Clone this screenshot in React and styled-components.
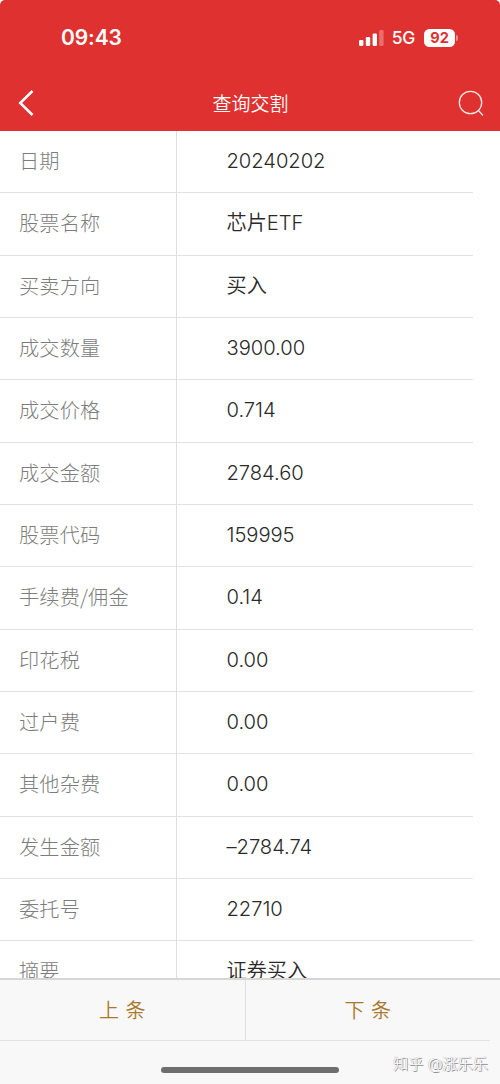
import styled, { createGlobalStyle } from "styled-components";

const records = [
  { label: "日期", value: "20240202" },
  { label: "股票名称", value: "芯片ETF" },
  { label: "买卖方向", value: "买入" },
  { label: "成交数量", value: "3900.00" },
  { label: "成交价格", value: "0.714" },
  { label: "成交金额", value: "2784.60" },
  { label: "股票代码", value: "159995" },
  { label: "手续费/佣金", value: "0.14" },
  { label: "印花税", value: "0.00" },
  { label: "过户费", value: "0.00" },
  { label: "其他杂费", value: "0.00" },
  { label: "发生金额", value: "–2784.74" },
  { label: "委托号", value: "22710" },
  { label: "摘要", value: "证券买入" },
];

const App = () => {
  return (
    <Screen>
      <GlobalStyle />
      <Header>
        <StatusBar>
          <Time>09:43</Time>
          <Signal />
          <Network>5G</Network>
          <Battery>92</Battery>
          <BatteryTip />
        </StatusBar>
        <NavBar>
          <BackIcon viewBox="0 0 16 26">
            <path d="M14.5 1 L2.2 13 L14.5 25" />
          </BackIcon>
          <Title>查询交割</Title>
          <SearchIcon viewBox="0 0 26 27">
            <circle cx="12.5" cy="12.5" r="11.2" />
            <path d="M20.5 20.5 L25 25.5" />
          </SearchIcon>
        </NavBar>
      </Header>
      <Table>
        {records.map(({ label, value }) => (
          <Row key={label}>
            <Label>{label}</Label>
            <Value>{value}</Value>
          </Row>
        ))}
      </Table>
      <Footer>
        <Pager>
          <PagerButton $divider>上 条</PagerButton>
          <PagerButton>下 条</PagerButton>
        </Pager>
        <HomeArea>
          <HomeBar />
          <Watermark>知乎 @涨乐乐</Watermark>
        </HomeArea>
      </Footer>
    </Screen>
  );
};

const Signal = () => (
  <SignalIcon viewBox="0 0 25 16">
    <rect x="0" y="10" width="4.4" height="6" rx="1.3" />
    <rect x="6.8" y="7" width="4.4" height="9" rx="1.3" />
    <rect x="13.6" y="3.5" width="4.4" height="12.5" rx="1.3" />
    <rect x="20.2" y="0" width="4.4" height="16" rx="1.3" opacity="0.3" />
  </SignalIcon>
);

const GlobalStyle = createGlobalStyle`
  * {
    box-sizing: border-box;
  }
  body {
    margin: 0;
    background: #fff;
  }
`;

const Screen = styled.main`
  width: 500px;
  height: 1084px;
  display: flex;
  flex-direction: column;
  overflow: hidden;
  background: #fff;
  font-family: Inter, "Noto Sans CJK SC", sans-serif;
`;

const Header = styled.header`
  height: 131px;
  flex-shrink: 0;
  background: #de3130;
  color: #fff;
  border-radius: 5px 5px 0 0;
`;

const StatusBar = styled.div`
  height: 75px;
  padding: 0 42px 0 61px;
  display: flex;
  align-items: center;
`;

const Time = styled.span`
  margin-right: auto;
  font-size: 21px;
  font-weight: 600;
  letter-spacing: -0.1px;
`;

const SignalIcon = styled.svg`
  width: 25px;
  height: 16px;
  fill: #fff;
`;

const Network = styled.span`
  margin-left: 8px;
  font-size: 17.5px;
  font-weight: 500;
  letter-spacing: -0.3px;
`;

const Battery = styled.span`
  width: 31px;
  height: 18px;
  margin-left: 9px;
  border-radius: 5.5px;
  background: #fff;
  color: #de3130;
  font-size: 14.5px;
  font-weight: 700;
  line-height: 18px;
  text-align: center;
`;

const BatteryTip = styled.span`
  width: 2px;
  height: 6px;
  margin-left: 1px;
  border-radius: 0 2px 2px 0;
  background: rgba(255, 255, 255, 0.45);
`;

const NavBar = styled.nav`
  height: 56px;
  padding: 0 16px 0 18px;
  display: flex;
  align-items: center;
  justify-content: space-between;
`;

const BackIcon = styled.svg`
  width: 16px;
  height: 26px;
  fill: none;
  stroke: #fff;
  stroke-width: 2.5;
`;

const Title = styled.h1`
  margin: 0 0 1px 9px;
  font-size: 19px;
  font-weight: 350;
`;

const SearchIcon = styled.svg`
  width: 26px;
  height: 27px;
  fill: none;
  stroke: #ffe6e4;
  stroke-width: 1.3;
`;

const Table = styled.section`
  flex: 1;
  min-height: 0;
  overflow: hidden;
`;

const Row = styled.div`
  width: 473px;
  height: 62.35px;
  display: flex;
  border-bottom: 1px solid #e2e2e2;
  font-size: 20.2px;
  line-height: 60px;
  white-space: nowrap;
`;

const Label = styled.div`
  width: 177px;
  padding-left: 19px;
  border-right: 1px solid #dedede;
  color: #7c7c7c;
  font-family: "Noto Sans CJK SC", sans-serif;
  font-weight: 300;
  letter-spacing: 0.15px;
`;

const Value = styled.div`
  padding-left: 49.5px;
  color: #2a2a2a;
  font-weight: 350;
  letter-spacing: -0.05px;
`;

const Footer = styled.footer`
  height: 106px;
  flex-shrink: 0;
  border-top: 2px solid #d6d6d6;
  background: #f8f8f8;
`;

const Pager = styled.div`
  width: 490px;
  height: 61px;
  display: flex;
  border-bottom: 1px solid #e2e2e2;
`;

const PagerButton = styled.button`
  flex: 1;
  padding: 0 0 1px;
  border: 0;
  border-right: ${({ $divider }) => ($divider ? "1px solid #dedede" : "0")};
  background: none;
  color: #a9782c;
  font: inherit;
  font-size: 20px;
  font-weight: 350;
  word-spacing: 1px;
`;

const HomeArea = styled.div`
  position: relative;
  height: 43px;
  padding-top: 26px;
`;

const HomeBar = styled.div`
  width: 178px;
  height: 6px;
  margin: 0 auto;
  border-radius: 3px;
  background: #6e6e6e;
`;

const Watermark = styled.span`
  position: absolute;
  right: 12px;
  top: 12px;
  color: #fafafa;
  font-size: 15.2px;
  font-weight: 300;
  line-height: 22px;
  text-shadow: -0.5px 0 0.5px #bbb, 1px 1px 0.5px #888;
`;

export default App;
